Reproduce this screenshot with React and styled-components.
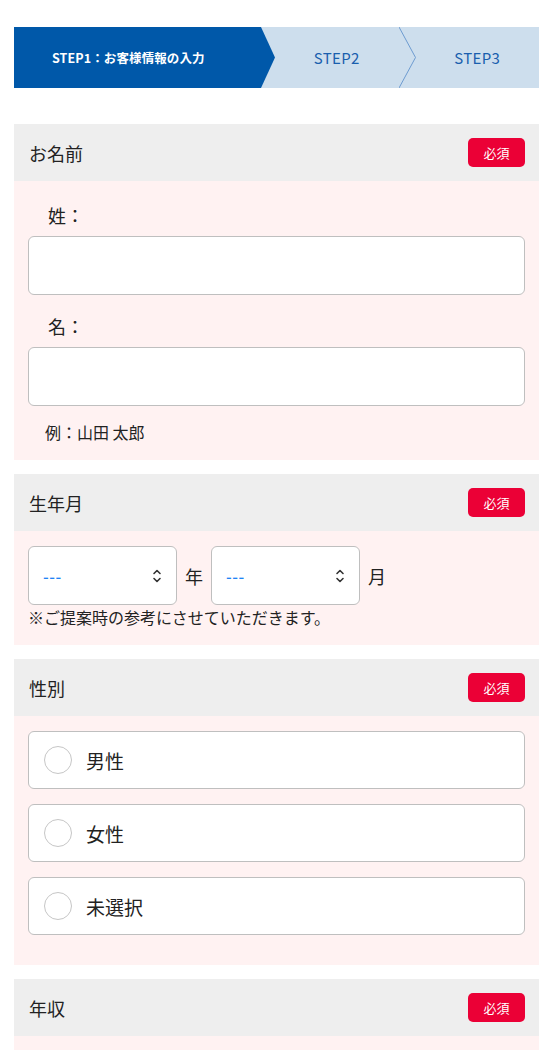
import React from "react";
import styled, { createGlobalStyle } from "styled-components";

const GlobalStyle = createGlobalStyle`
  html, body {
    margin: 0;
    padding: 0;
    background: #fff;
    font-family: "Noto Sans CJK JP", "Noto Sans", sans-serif;
    color: #222;
  }
  * { box-sizing: border-box; }
`;

function UpDownIcon() {
  return (
    <svg width="10" height="16" viewBox="0 0 10 16" fill="none" stroke="#333" strokeWidth="1.6" strokeLinecap="round" strokeLinejoin="round">
      <path d="M2 5.5 L5 2.5 L8 5.5" />
      <path d="M2 10.5 L5 13.5 L8 10.5" />
    </svg>
  );
}

function Chevron() {
  return (
    <ChevronSvg width="17" height="61" viewBox="0 0 17 61" fill="none">
      <path d="M0 0 L16.5 30.5 L0 61" stroke="#6d9bd0" strokeWidth="1" />
    </ChevronSvg>
  );
}

function Section({ title, children }) {
  return (
    <Block>
      <BlockHead>
        <BlockTitle>{title}</BlockTitle>
        <Badge>必須</Badge>
      </BlockHead>
      <BlockBody>{children}</BlockBody>
    </Block>
  );
}

function App() {
  return (
    <Page>
      <GlobalStyle />
      <Steps>
        <StepActive>STEP1：お客様情報の入力</StepActive>
        <Step>STEP2</Step>
        <Chevron />
        <Step>STEP3</Step>
      </Steps>

      <Section title="お名前">
        <FieldLabel>姓：</FieldLabel>
        <TextInput />
        <FieldLabel>名：</FieldLabel>
        <TextInput />
        <Example>例：山田 太郎</Example>
      </Section>

      <Section title="生年月">
        <DateRow>
          <SelectBox>
            <Dash>---</Dash>
            <UpDownIcon />
          </SelectBox>
          <Unit>年</Unit>
          <SelectBox>
            <Dash>---</Dash>
            <UpDownIcon />
          </SelectBox>
          <Unit>月</Unit>
        </DateRow>
        <Note>※ご提案時の参考にさせていただきます。</Note>
      </Section>

      <Section title="性別">
        <RadioList>
          {["男性", "女性", "未選択"].map((g) => (
            <RadioItem key={g}>
              <RadioDot />
              <RadioText>{g}</RadioText>
            </RadioItem>
          ))}
        </RadioList>
      </Section>

      <Section title="年収">
        <Spacer />
      </Section>
    </Page>
  );
}

export default App;

const Page = styled.div`
  width: 553px;
  height: 1050px;
  overflow: hidden;
  padding: 27px 14px 0 14px;
`;

const Steps = styled.div`
  display: flex;
  height: 61px;
  background: #cddeed;
  margin-bottom: 36px;
`;

const StepActive = styled.div`
  width: 261px;
  display: flex;
  align-items: center;
  padding-left: 38px;
  background: #0058a9;
  color: #fff;
  font-size: 12.5px;
  font-weight: 700;
  letter-spacing: 0.1px;
  clip-path: polygon(0 0, calc(100% - 14px) 0, 100% 50%, calc(100% - 14px) 100%, 0 100%);
`;

const Step = styled.div`
  flex: 1;
  display: flex;
  align-items: center;
  justify-content: center;
  color: #1a5fae;
  font-size: 15px;
  letter-spacing: 0.3px;
`;

const ChevronSvg = styled.svg`
  flex: none;
  display: block;
`;

const Block = styled.section`
  margin-bottom: 14px;
`;

const BlockHead = styled.div`
  height: 57px;
  background: #eeeeee;
  display: flex;
  align-items: center;
  justify-content: space-between;
  padding: 0 14px 0 15px;
`;

const BlockTitle = styled.h2`
  margin: 0;
  font-size: 18px;
  font-weight: 400;
  color: #222;
`;

const Badge = styled.span`
  width: 57px;
  height: 29px;
  border-radius: 5px;
  background: #eb0036;
  color: #fff;
  font-size: 13px;
  display: flex;
  align-items: center;
  justify-content: center;
`;

const BlockBody = styled.div`
  background: #fff2f2;
  padding: 15px 14px 14px 14px;
`;

const FieldLabel = styled.div`
  font-size: 18px;
  padding-left: 20px;
  height: 40px;
  line-height: 38px;
`;

const TextInput = styled.input`
  display: block;
  width: 100%;
  height: 59px;
  border: 1.5px solid #bfbfbf;
  border-radius: 6px;
  background: #fff;
  margin-bottom: 12px;
`;

const Example = styled.div`
  font-size: 16px;
  padding-left: 17px;
  line-height: 28px;
  margin-top: 2px;
`;

const DateRow = styled.div`
  display: flex;
  align-items: center;
  gap: 8px;
`;

const SelectBox = styled.div`
  width: 149px;
  height: 59px;
  border: 1.5px solid #bfbfbf;
  border-radius: 6px;
  background: #fff;
  display: flex;
  align-items: center;
  justify-content: space-between;
  padding: 0 14px 0 14px;
`;

const Dash = styled.span`
  color: #1f84f5;
  font-size: 16px;
  font-weight: 500;
  letter-spacing: 0.5px;
`;

const Unit = styled.span`
  font-size: 18px;
  width: 18px;
  text-align: center;
`;

const Note = styled.div`
  font-size: 16px;
  line-height: 24px;
  padding-bottom: 2px;
`;

const RadioList = styled.div`
  display: flex;
  flex-direction: column;
  gap: 15px;
  padding-bottom: 16px;
`;

const RadioItem = styled.label`
  height: 58px;
  border: 1.5px solid #bfbfbf;
  border-radius: 6px;
  background: #fff;
  display: flex;
  align-items: center;
  padding-left: 15px;
`;

const RadioDot = styled.span`
  width: 28px;
  height: 28px;
  border-radius: 50%;
  border: 1.5px solid #c6c6c6;
  background: #fff;
  flex: none;
`;

const RadioText = styled.span`
  font-size: 19px;
  margin-left: 14px;
  color: #222;
`;

const Spacer = styled.div`
  height: 40px;
`;
